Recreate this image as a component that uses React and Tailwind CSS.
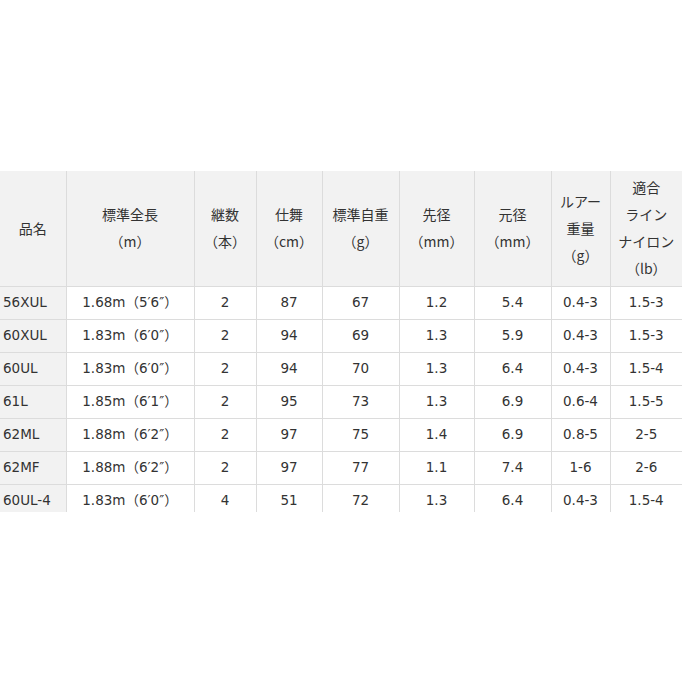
import React from 'react'

const rows = [
  ['56XUL', '1.68m（5′6″）', '2', '87', '67', '1.2', '5.4', '0.4-3', '1.5-3'],
  ['60XUL', '1.83m（6′0″）', '2', '94', '69', '1.3', '5.9', '0.4-3', '1.5-3'],
  ['60UL', '1.83m（6′0″）', '2', '94', '70', '1.3', '6.4', '0.4-3', '1.5-4'],
  ['61L', '1.85m（6′1″）', '2', '95', '73', '1.3', '6.9', '0.6-4', '1.5-5'],
  ['62ML', '1.88m（6′2″）', '2', '97', '75', '1.4', '6.9', '0.8-5', '2-5'],
  ['62MF', '1.88m（6′2″）', '2', '97', '77', '1.1', '7.4', '1-6', '2-6'],
  ['60UL-4', '1.83m（6′0″）', '4', '51', '72', '1.3', '6.4', '0.4-3', '1.5-4'],
]

const heads = [
  ['品名'],
  ['標準全長', '（m）'],
  ['継数', '（本）'],
  ['仕舞', '（cm）'],
  ['標準自重', '（g）'],
  ['先径', '（mm）'],
  ['元径', '（mm）'],
  ['ルアー', '重量', '（g）'],
  ['適合', 'ライン', 'ナイロン', '（lb）'],
]

const widths = ['w-[66px]', 'w-[128px]', 'w-[62px]', 'w-[66px]', 'w-[77px]', 'w-[75px]', 'w-[77px]', 'w-[59px]', 'w-[72px]']

export default function App() {
  return (
    <div className="bg-white w-[682px] h-[682px] pt-[171px]" style={{ fontFamily: '"DejaVu Sans", "Noto Sans CJK JP", sans-serif' }}>
      <div className="h-[341px] overflow-hidden">
        <table className="table-fixed border-collapse w-[682px] text-[#333]">
          <colgroup>
            {widths.map((w, i) => <col key={i} className={w} />)}
          </colgroup>
          <thead>
            <tr className="h-[115px] bg-[#f2f2f2]">
              {heads.map((h, i) => (
                <th
                  key={i}
                  className={`font-normal text-[14px] leading-[27px] text-center border-[#dcdcdc] ${i > 0 ? 'border-l' : ''} border-b`}
                  style={{ fontFamily: '"Noto Sans CJK JP", sans-serif' }}
                >
                  {h.map((l, j) => <div key={j}>{l}</div>)}
                </th>
              ))}
            </tr>
          </thead>
          <tbody>
            {rows.map((r, ri) => (
              <tr key={ri} className="h-[33px]">
                {r.map((c, ci) => (
                  <td
                    key={ci}
                    className={`text-[13.5px] border-b border-[#dcdcdc] ${ci > 0 ? 'border-l text-center bg-white' : 'text-left pl-[3px] bg-[#f2f2f2]'}`}
                  >
                    {c}
                  </td>
                ))}
              </tr>
            ))}
          </tbody>
        </table>
      </div>
    </div>
  )
}
